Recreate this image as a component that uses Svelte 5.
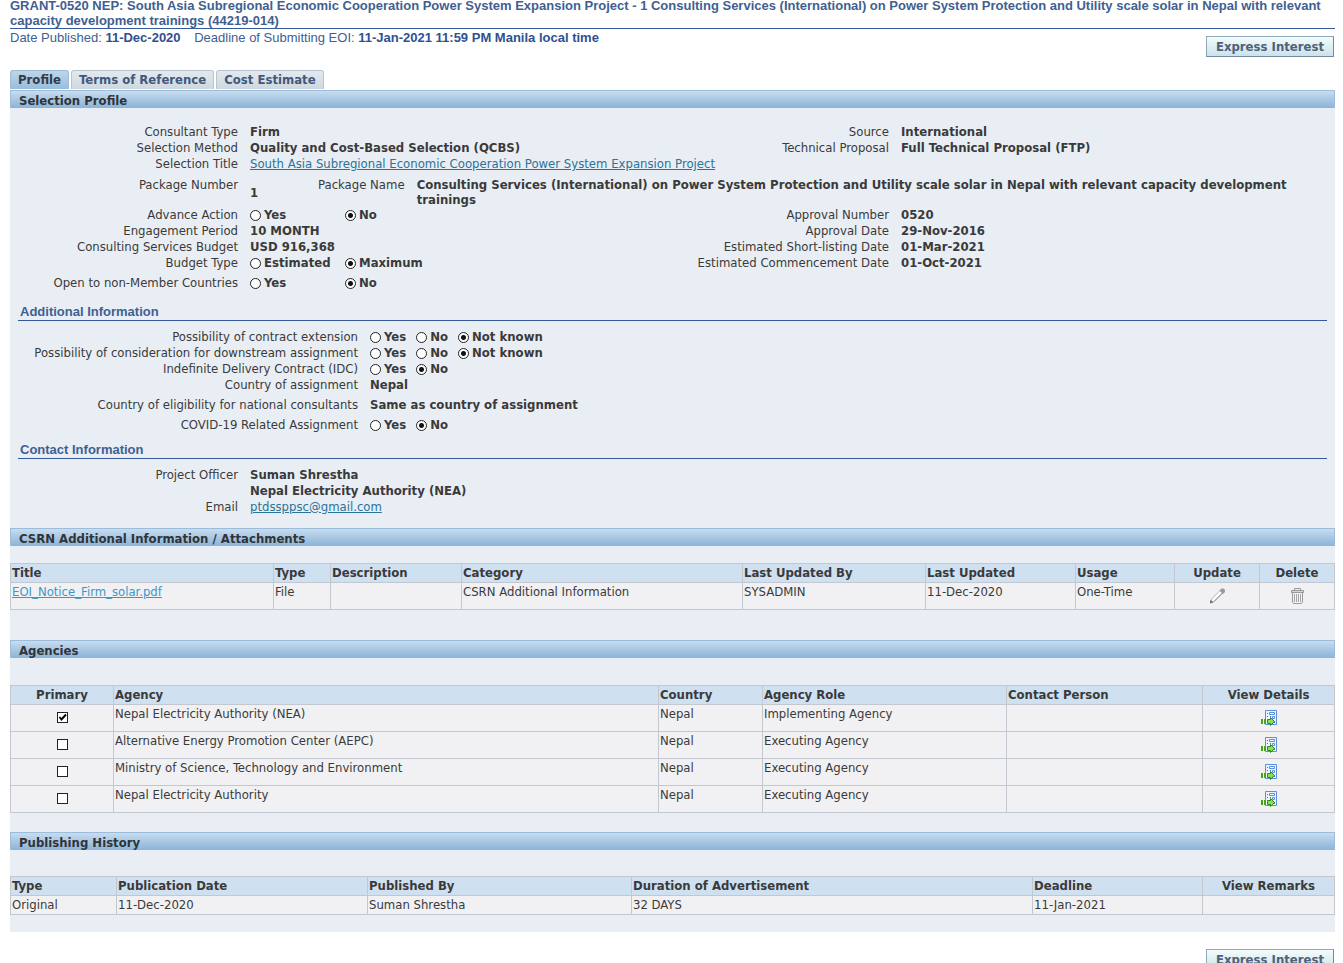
<script>
	const tabs = ['Profile', 'Terms of Reference', 'Cost Estimate'];
	let activeTab = $state('Profile');

	const yesNo = ['Yes', 'No'];
	const yesNoUnknown = ['Yes', 'No', 'Not known'];

	let answers = $state({
		advance: 'No',
		budget: 'Maximum',
		nonMember: 'No',
		extension: 'Not known',
		downstream: 'Not known',
		idc: 'No',
		covid: 'No'
	});

	// column widths are shared out in proportion when the table grows
	const attachmentCols = [
		{ title: 'Title', width: 263 },
		{ title: 'Type', width: 57 },
		{ title: 'Description', width: 131 },
		{ title: 'Category', width: 281 },
		{ title: 'Last Updated By', width: 183 },
		{ title: 'Last Updated', width: 150 },
		{ title: 'Usage', width: 99 },
		{ title: 'Update', width: 85, center: true },
		{ title: 'Delete', width: 75, center: true }
	];

	const agencyCols = [
		{ title: 'Primary', width: 103, center: true },
		{ title: 'Agency', width: 545 },
		{ title: 'Country', width: 104 },
		{ title: 'Agency Role', width: 244 },
		{ title: 'Contact Person', width: 196 },
		{ title: 'View Details', width: 132, center: true }
	];

	const historyCols = [
		{ title: 'Type', width: 106 },
		{ title: 'Publication Date', width: 251 },
		{ title: 'Published By', width: 264 },
		{ title: 'Duration of Advertisement', width: 401 },
		{ title: 'Deadline', width: 170 },
		{ title: 'View Remarks', width: 132, center: true }
	];

	let agencies = $state([
		{ primary: true, name: 'Nepal Electricity Authority (NEA)', country: 'Nepal', role: 'Implementing Agency' },
		{ primary: false, name: 'Alternative Energy Promotion Center (AEPC)', country: 'Nepal', role: 'Executing Agency' },
		{ primary: false, name: 'Ministry of Science, Technology and Environment', country: 'Nepal', role: 'Executing Agency' },
		{ primary: false, name: 'Nepal Electricity Authority', country: 'Nepal', role: 'Executing Agency' }
	]);
</script>

{#snippet radios(key, label, options, wide = false)}
	<div class="label" id="{key}-label">{label}</div>
	<div class="radios" class:wide role="radiogroup" aria-labelledby="{key}-label">
		{#each options as option}
			<label><input type="radio" name={key} value={option} bind:group={answers[key]} />{option}</label>
		{/each}
	</div>
{/snippet}

{#snippet head(cols)}
	<colgroup>
		{#each cols as col}
			<col style:width="{col.width}px" />
		{/each}
	</colgroup>
	<thead>
		<tr>
			{#each cols as col}
				<th class:center={col.center}>{col.title}</th>
			{/each}
		</tr>
	</thead>
{/snippet}

<main>
	<h1>
		GRANT-0520 NEP: South Asia Subregional Economic Cooperation Power System Expansion Project - 1
		Consulting Services (International) on Power System Protection and Utility scale solar in Nepal
		with relevant capacity development trainings (44219-014)
	</h1>

	<div class="dates">
		<p>
			<span>Date Published: <b>11-Dec-2020</b></span>
			<span>Deadline of Submitting EOI: <b>11-Jan-2021 11:59 PM Manila local time</b></span>
		</p>
		<button class="express">Express Interest</button>
	</div>

	<nav>
		{#each tabs as tab}
			<button class="tab" class:active={tab === activeTab} onclick={() => (activeTab = tab)}>{tab}</button>
		{/each}
	</nav>

	<div class="panel">
		<h2>Selection Profile</h2>

		<div class="fields profile">
			<div class="label">Consultant Type</div>
			<div class="value">Firm</div>
			<div class="label">Source</div>
			<div class="value">International</div>

			<div class="label">Selection Method</div>
			<div class="value">Quality and Cost-Based Selection (QCBS)</div>
			<div class="label">Technical Proposal</div>
			<div class="value">Full Technical Proposal (FTP)</div>

			<div class="label">Selection Title</div>
			<div class="value span">
				<a href="#project">South Asia Subregional Economic Cooperation Power System Expansion Project</a>
			</div>

			<div class="label package">Package Number</div>
			<div class="value span package">
				<span class="number">1</span>
				<span class="label">Package Name</span>
				<span class="name">
					Consulting Services (International) on Power System Protection and Utility scale solar in
					Nepal with relevant capacity development trainings
				</span>
			</div>

			{@render radios('advance', 'Advance Action', yesNo, true)}
			<div class="label">Approval Number</div>
			<div class="value">0520</div>

			<div class="label">Engagement Period</div>
			<div class="value">10 MONTH</div>
			<div class="label">Approval Date</div>
			<div class="value">29-Nov-2016</div>

			<div class="label">Consulting Services Budget</div>
			<div class="value">USD 916,368</div>
			<div class="label">Estimated Short-listing Date</div>
			<div class="value">01-Mar-2021</div>

			{@render radios('budget', 'Budget Type', ['Estimated', 'Maximum'], true)}
			<div class="label">Estimated Commencement Date</div>
			<div class="value">01-Oct-2021</div>
		</div>
		<div class="fields profile spaced">
			{@render radios('nonMember', 'Open to non-Member Countries', yesNo, true)}
		</div>

		<h3>Additional Information</h3>
		<div class="fields additional">
			{@render radios('extension', 'Possibility of contract extension', yesNoUnknown)}
			{@render radios('downstream', 'Possibility of consideration for downstream assignment', yesNoUnknown)}
			{@render radios('idc', 'Indefinite Delivery Contract (IDC)', yesNo)}
			<div class="label">Country of assignment</div>
			<div class="value">Nepal</div>
		</div>
		<div class="fields additional spaced">
			<div class="label">Country of eligibility for national consultants</div>
			<div class="value">Same as country of assignment</div>
		</div>
		<div class="fields additional spaced">
			{@render radios('covid', 'COVID-19 Related Assignment', yesNo)}
		</div>

		<h3>Contact Information</h3>
		<div class="fields contact">
			<div class="label">Project Officer</div>
			<div class="value">Suman Shrestha<br />Nepal Electricity Authority (NEA)</div>
			<div class="label">Email</div>
			<div class="value"><a href="mailto:ptdssppsc@gmail.com">ptdssppsc@gmail.com</a></div>
		</div>

		<h2>CSRN Additional Information / Attachments</h2>
		<table class="attachments">
			{@render head(attachmentCols)}
			<tbody>
				<tr>
					<td><a class="file" href="#attachment">EOI_Notice_Firm_solar.pdf</a></td>
					<td>File</td>
					<td></td>
					<td>CSRN Additional Information</td>
					<td>SYSADMIN</td>
					<td>11-Dec-2020</td>
					<td>One-Time</td>
					<td class="center">
						<button class="icon" aria-label="Update" disabled>
							<svg width="16" height="16" viewBox="0 0 16 16">
								<path d="M1.500 14.500l1-3.500L11 2.500l2.500 2.500L5 13.500z" fill="#fdfdfd" stroke="#b4b4b4" />
								<path d="M5 13.500L13.500 5" stroke="#8c8c8c" />
								<path d="M10.500 2.500l2-2h2l1.500 1.500v2l-2 2z" fill="#9a9a9a" />
								<path d="M1 15.500v-2.500l1-1 2.500 2.500z" fill="#777" />
							</svg>
						</button>
					</td>
					<td class="center">
						<button class="icon" aria-label="Delete" disabled>
							<svg width="16" height="16" viewBox="0 0 16 16">
								<path d="M3.500 4.500h10V14l-1 1.500h-8L3.500 14z" fill="#f4f4f4" stroke="#999" />
								<path d="M5.500 6v8M7.500 6v8M9.500 6v8M11.500 6v8" stroke="#a4a4a4" />
								<path d="M2.500 2.500h12v2h-12z" fill="#d4d4d4" stroke="#999" />
								<path d="M5.500 2V.5h6V2" fill="none" stroke="#999" />
							</svg>
						</button>
					</td>
				</tr>
			</tbody>
		</table>

		<h2>Agencies</h2>
		<table class="agencies">
			{@render head(agencyCols)}
			<tbody>
				{#each agencies as agency}
					<tr>
						<td class="center">
							<input type="checkbox" aria-label="Primary: {agency.name}" bind:checked={agency.primary} />
						</td>
						<td>{agency.name}</td>
						<td>{agency.country}</td>
						<td>{agency.role}</td>
						<td></td>
						<td class="center">
							<button class="icon" aria-label="View details of {agency.name}">
								<svg width="16" height="16" viewBox="0 0 16 16">
									<path d="M4.500.5h11v14h-11z" fill="#edf4ff" stroke="#5b8fe0" />
									<path d="M8.500 2.500h5v2h-5zM11.500 6.500h2v2h-2z" fill="#fff" stroke="#5b8fe0" />
									<path d="M6 3h1v1H6zM6 6h1v1H6zM9 6h1v1H9zM13 11h1v2h-1z" fill="#3f74cc" />
									<path d="M0 9h2v5H0zM3 9h2v5H3z" fill="#45a51d" />
									<path d="M6.500 9.500h3v-2l4 4-4 4v-2h-3z" fill="#8be052" stroke="#2f8a14" />
								</svg>
							</button>
						</td>
					</tr>
				{/each}
			</tbody>
		</table>

		<h2>Publishing History</h2>
		<table class="history">
			{@render head(historyCols)}
			<tbody>
				<tr>
					<td>Original</td>
					<td>11-Dec-2020</td>
					<td>Suman Shrestha</td>
					<td>32 DAYS</td>
					<td>11-Jan-2021</td>
					<td></td>
				</tr>
			</tbody>
		</table>
	</div>

	<footer>
		<button class="express">Express Interest</button>
	</footer>
</main>

<style>
	:global(html) {
		scrollbar-width: none;
	}

	:global(body) {
		background: #fff;
	}

	main {
		padding: 0 8px 0 10px;
		margin-top: -2px;
		color: #3a3a3a;
		font: 13px/16px 'DejaVu Sans Condensed', Tahoma, Verdana, sans-serif;
	}

	h1,
	h2,
	h3,
	p {
		margin: 0;
	}

	h1 {
		border-bottom: 1px solid #34589a;
		color: #3f6091;
		font: bold 13px/15px 'Liberation Sans', Arial, sans-serif;
	}

	.dates {
		display: flex;
		justify-content: space-between;
		height: 41px;
		color: #3f6091;
		font: 13px/16px 'Liberation Sans', Arial, sans-serif;
	}

	.dates p {
		padding-top: 1px;
	}

	.dates span {
		margin-right: 10px;
	}

	.dates b {
		color: #2f5190;
	}

	.express {
		align-self: flex-start;
		height: 21px;
		margin: 7px 1px 0 0;
		padding: 0 9px;
		border: 1px solid;
		border-color: #8fa9bb #77889f #77889f #8fa9bb;
		background: linear-gradient(#f4fbfc, #c9e4ea);
		color: #50607a;
		font: bold 13px/16px 'DejaVu Sans Condensed', Tahoma, Verdana, sans-serif;
	}

	nav {
		display: flex;
		gap: 2px;
	}

	.tab {
		height: 19px;
		padding: 0 7px;
		border: 1px solid #b8c4cf;
		border-bottom: 0;
		border-radius: 3px 3px 0 0;
		background: linear-gradient(#e3e9ee, #cfd8e0);
		color: #41597c;
		font: bold 13px/16px 'DejaVu Sans Condensed', Tahoma, Verdana, sans-serif;
	}

	.tab.active {
		border-color: #9dbbd6;
		background: linear-gradient(#bed5ea, #98bddd);
		color: #333c46;
	}

	.panel {
		margin-top: 1px;
		padding-bottom: 17px;
		background: #e9eef5;
	}

	h2 {
		height: 18px;
		padding-left: 8px;
		box-sizing: border-box;
		border: 1px solid #9bbddb;
		border-bottom: 0;
		background: linear-gradient(#c8dcee, #8bb3d8);
		color: #303438;
		font-size: 13px;
		line-height: 19px;
	}

	h3 {
		margin: 0 8px 8px;
		padding: 0 2px;
		border-bottom: 1px solid #34589a;
		color: #3f6091;
		font: bold 13px/16px 'Liberation Sans', Arial, sans-serif;
	}

	.fields {
		display: grid;
		column-gap: 12px;
	}

	.profile {
		grid-template-columns: 228px 1fr 210px 434px;
	}

	.additional {
		grid-template-columns: 348px 1fr;
	}

	.contact {
		grid-template-columns: 228px 1fr;
		padding-bottom: 13px;
	}

	h2 + .fields {
		padding-top: 16px;
	}

	.spaced {
		padding-top: 4px;
	}

	.profile + h3 {
		margin-top: 13px;
	}

	.additional + h3 {
		margin-top: 9px;
	}

	.label {
		text-align: right;
		font-weight: normal;
	}

	.value {
		font-weight: bold;
	}

	.span {
		grid-column: 2 / -1;
	}

	.package {
		padding-top: 5px;
		line-height: 15px;
	}

	.value.package {
		display: flex;
		gap: 12px;
		padding-right: 40px;
	}

	.number {
		width: 56px;
		align-self: center;
	}

	.name {
		flex: 1;
	}

	.radios {
		display: flex;
		gap: 10px;
		font-weight: bold;
	}

	.radios label {
		display: flex;
		align-items: center;
		gap: 3px;
	}

	.radios.wide {
		gap: 0;
	}

	.radios.wide label {
		width: 95px;
	}

	input {
		appearance: none;
		width: 11px;
		height: 11px;
		margin: 0;
		border: 1px solid #222;
		background: #fff;
	}

	input[type='radio'] {
		border-radius: 50%;
	}

	input[type='radio']:checked {
		background: radial-gradient(circle, #111 2px, #fff 3px);
	}

	input[type='checkbox'] {
		display: block;
		margin: 7px auto 0;
	}

	input[type='checkbox']:checked {
		background: url("data:image/svg+xml,%3Csvg xmlns='http://www.w3.org/2000/svg' viewBox='0 0 9 9'%3E%3Cpath d='M1.500 4l2 2.500L8 1.500' fill='none' stroke='%23000' stroke-width='2'/%3E%3C/svg%3E") center / 9px 9px #fff;
	}

	a {
		color: #2b7397;
		font-weight: normal;
	}

	a.file {
		color: #3b98c6;
	}

	table {
		width: 100%;
		table-layout: fixed;
		border-collapse: collapse;
	}

	.attachments {
		margin: 17px 0 30px;
	}

	.agencies {
		margin: 27px 0 19px;
	}

	.history {
		margin-top: 26px;
	}

	th,
	td {
		padding: 0 1px;
		border: 1px solid #c3c8d0;
		text-align: left;
		vertical-align: top;
	}

	th {
		height: 18px;
		background: #cfe0f1;
		line-height: 18px;
	}

	td {
		height: 26px;
		background: #f1f1f4;
		line-height: 18px;
	}

	.history td {
		height: 18px;
	}

	.center {
		text-align: center;
	}

	.icon {
		display: block;
		margin: 5px auto 0;
		padding: 0;
		border: 0;
		background: none;
	}

	.icon svg {
		display: block;
	}

	footer {
		display: flex;
		justify-content: flex-end;
		padding-top: 10px;
	}
</style>
